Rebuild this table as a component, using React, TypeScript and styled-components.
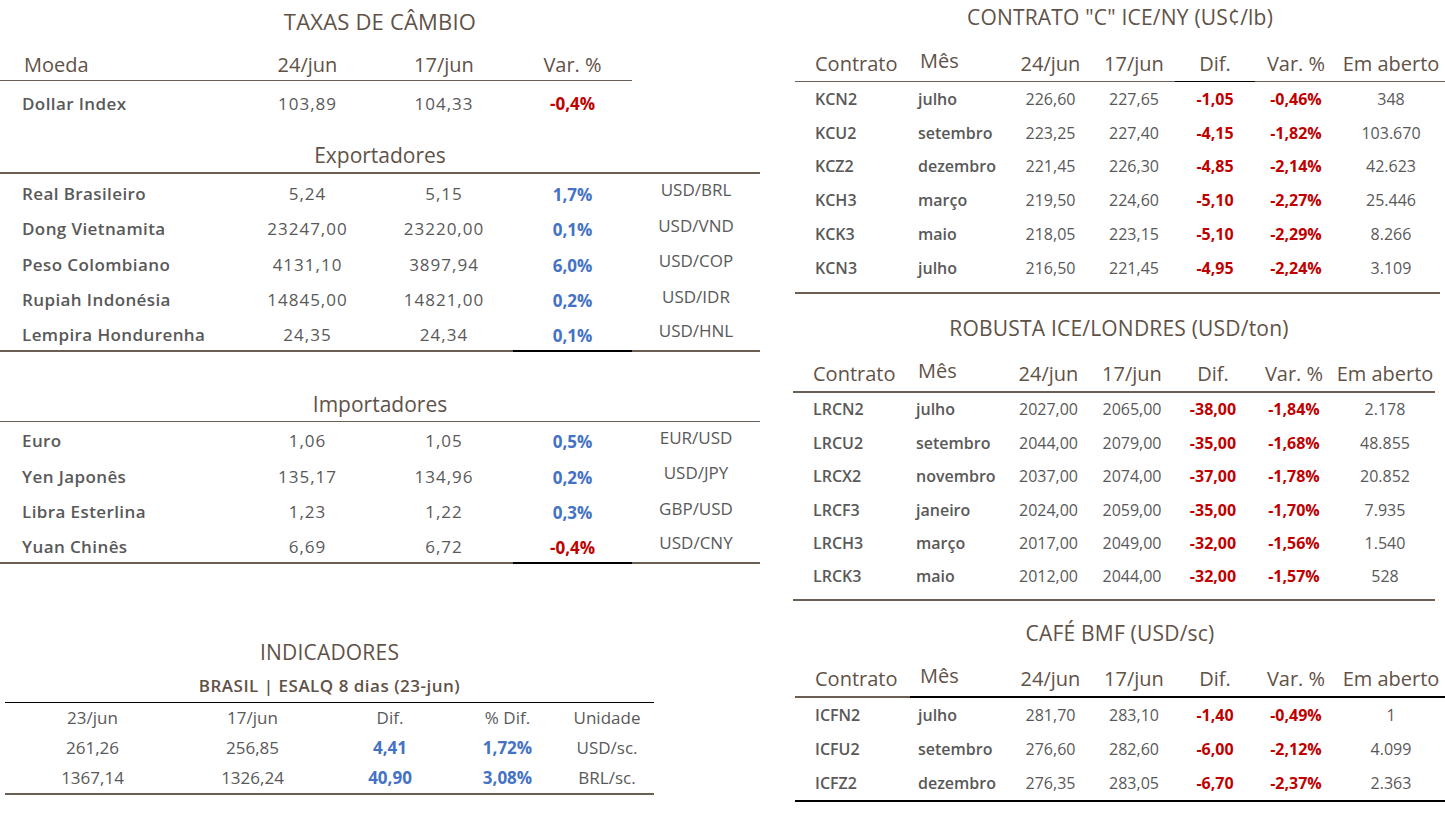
import styled, { createGlobalStyle } from 'styled-components';

const BROWN = '#5f5247';
const LINE = '#6b5e53';
const TEXT = '#595959';
const RED = '#c00000';
const BLUE = '#4472c4';

const GlobalStyle = createGlobalStyle`
  body {
    margin: 0;
    background: #ffffff;
    font-family: 'Open Sans', 'Liberation Sans', sans-serif;
  }
`;

type Tone = 'head' | 'label' | 'value' | 'red' | 'blue' | 'unit';
type Align = 'left' | 'center';

const tones: Record<Tone, string> = {
  head: `color: ${BROWN}; font-size: 20px; font-weight: 500;`,
  label: `color: ${TEXT}; font-weight: 600;`,
  value: `color: ${TEXT}; font-weight: 400;`,
  red: `color: ${RED}; font-weight: 700;`,
  blue: `color: ${BLUE}; font-weight: 700;`,
  unit: `color: ${TEXT}; font-weight: 400;`,
};

const Page = styled.div`
  display: flex;
  width: 1445px;
  height: 827px;
  overflow: hidden;
`;

const LeftCol = styled.div`
  display: flex;
  flex-direction: column;
  width: 760px;
`;

const RightCol = styled.div`
  display: flex;
  flex-direction: column;
  width: 652px;
  margin-left: 33px;
`;

const Title = styled.div<{ $h: number; $size?: number }>`
  height: ${(p) => p.$h}px;
  line-height: ${(p) => p.$h}px;
  text-align: center;
  color: ${BROWN};
  font-size: ${(p) => p.$size ?? 21}px;
  font-weight: 500;
  letter-spacing: 0.2px;
`;

const Row = styled.div<{ $cols: string; $h: number; $size?: number }>`
  display: grid;
  grid-template-columns: ${(p) => p.$cols};
  height: ${(p) => p.$h}px;
  font-size: ${(p) => p.$size ?? 16}px;
`;

const Cell = styled.div<{
  $tone: Tone;
  $align?: Align;
  $pl?: number;
  $line?: string;
  $lw?: number;
  $end?: boolean;
  $pb?: number;
  $pt?: number;
  $ls?: number;
}>`
  box-sizing: border-box;
  display: flex;
  align-items: ${(p) => (p.$end ? 'flex-end' : 'center')};
  justify-content: ${(p) => (p.$align === 'left' ? 'flex-start' : 'center')};
  padding-left: ${(p) => p.$pl ?? 0}px;
  padding-bottom: ${(p) => p.$pb ?? 0}px;
  padding-top: ${(p) => p.$pt ?? 0}px;
  letter-spacing: ${(p) => p.$ls ?? 0}px;
  white-space: nowrap;
  border-bottom: ${(p) => (p.$line ? `${p.$lw ?? 2}px solid ${p.$line}` : 'none')};
  ${(p) => tones[p.$tone]}
`;

const SectionHead = styled.div<{ $h: number; $lw: number }>`
  box-sizing: border-box;
  height: ${(p) => p.$h}px;
  display: flex;
  align-items: flex-end;
  justify-content: center;
  padding-bottom: 3px;
  border-bottom: ${(p) => p.$lw}px solid ${LINE};
  color: ${BROWN};
  font-size: 21px;
  font-weight: 500;
`;

/* ---------- Taxas de câmbio ---------- */

const FX_COLS = '240px 135px 138px 119px 128px';

type FxRow = [string, string, string, string, string];

const exportadores: FxRow[] = [
  ['Real Brasileiro', '5,24', '5,15', '1,7%', 'USD/BRL'],
  ['Dong Vietnamita', '23247,00', '23220,00', '0,1%', 'USD/VND'],
  ['Peso Colombiano', '4131,10', '3897,94', '6,0%', 'USD/COP'],
  ['Rupiah Indonésia', '14845,00', '14821,00', '0,2%', 'USD/IDR'],
  ['Lempira Hondurenha', '24,35', '24,34', '0,1%', 'USD/HNL'],
];

const importadores: FxRow[] = [
  ['Euro', '1,06', '1,05', '0,5%', 'EUR/USD'],
  ['Yen Japonês', '135,17', '134,96', '0,2%', 'USD/JPY'],
  ['Libra Esterlina', '1,23', '1,22', '0,3%', 'GBP/USD'],
  ['Yuan Chinês', '6,69', '6,72', '-0,4%', 'USD/CNY'],
];

const signTone = (v: string): Tone => (v.startsWith('-') ? 'red' : 'blue');

const FxLines = ({ rows }: { rows: FxRow[] }) => (
  <>
    {rows.map((r, i) => {
      const last = i === rows.length - 1;
      const line = last ? LINE : undefined;
      return (
        <Row key={r[0]} $cols={FX_COLS} $h={35.5} $size={17}>
          <Cell $tone="label" $align="left" $pl={22} $pt={3} $ls={0.4} $line={line}>
            {r[0]}
          </Cell>
          <Cell $tone="value" $pt={3} $ls={1} $line={line}>
            {r[1]}
          </Cell>
          <Cell $tone="value" $pt={3} $ls={1} $line={line}>
            {r[2]}
          </Cell>
          <Cell $tone={signTone(r[3])} $pt={5} $line={last ? '#000000' : undefined}>
            {r[3]}
          </Cell>
          <Cell $tone="unit" $pb={4} $line={line}>
            {r[4]}
          </Cell>
        </Row>
      );
    })}
  </>
);

const TaxasDeCambio = () => (
  <div>
    <Title $h={42} $size={22}>TAXAS DE CÂMBIO</Title>
    <Row $cols={FX_COLS} $h={39}>
      <Cell $tone="head" $align="left" $pl={24} $end $pb={2} $line={LINE} $lw={1.5}>Moeda</Cell>
      <Cell $tone="head" $end $pb={2} $line={LINE} $lw={1.5}>24/jun</Cell>
      <Cell $tone="head" $end $pb={2} $line={LINE} $lw={1.5}>17/jun</Cell>
      <Cell $tone="head" $end $pb={2} $line={LINE} $lw={1.5}>Var. %</Cell>
      <Cell $tone="unit" />
    </Row>
    <Row $cols={FX_COLS} $h={44} $size={17}>
      <Cell $tone="label" $align="left" $pl={22} $ls={0.4}>Dollar Index</Cell>
      <Cell $tone="value" $ls={1}>103,89</Cell>
      <Cell $tone="value" $ls={1}>104,33</Cell>
      <Cell $tone="red">-0,4%</Cell>
      <Cell $tone="unit" />
    </Row>
    <SectionHead $h={49} $lw={2}>Exportadores</SectionHead>
    <FxLines rows={exportadores} />
    <SectionHead $h={70} $lw={1}>Importadores</SectionHead>
    <FxLines rows={importadores} />
  </div>
);

/* ---------- Indicadores ---------- */

const IND_COLS = '175px 145px 130px 105px 94px';

const IndBlock = styled.div`
  width: 649px;
  margin: 71px 0 0 5px;
`;

const SubTitle = styled.div`
  box-sizing: border-box;
  height: 34px;
  display: flex;
  align-items: center;
  justify-content: center;
  border-bottom: 1px solid #000000;
  color: ${BROWN};
  font-size: 17px;
  font-weight: 600;
  letter-spacing: 0.5px;
`;

const indRows: [string, string, string, string, string][] = [
  ['261,26', '256,85', '4,41', '1,72%', 'USD/sc.'],
  ['1367,14', '1326,24', '40,90', '3,08%', 'BRL/sc.'],
];

const Indicadores = () => (
  <IndBlock>
    <Title $h={34}>INDICADORES</Title>
    <SubTitle>BRASIL | ESALQ 8 dias (23-jun)</SubTitle>
    <Row $cols={IND_COLS} $h={30} $size={17}>
      {['23/jun', '17/jun', 'Dif.', '% Dif.', 'Unidade'].map((h) => (
        <Cell key={h} $tone="value">{h}</Cell>
      ))}
    </Row>
    {indRows.map((r, i) => {
      const line = i === indRows.length - 1 ? LINE : undefined;
      return (
        <Row key={r[0]} $cols={IND_COLS} $h={i === 0 ? 30 : 32} $size={17}>
          <Cell $tone="value" $line={line}>{r[0]}</Cell>
          <Cell $tone="value" $line={line}>{r[1]}</Cell>
          <Cell $tone="blue" $line={line}>{r[2]}</Cell>
          <Cell $tone="blue" $line={line}>{r[3]}</Cell>
          <Cell $tone="value" $line={line}>{r[4]}</Cell>
        </Row>
      );
    })}
  </IndBlock>
);

/* ---------- Contratos (direita) ---------- */

type Contract = [string, string, string, string, string, string, string];

const kcRows: Contract[] = [
  ['KCN2', 'julho', '226,60', '227,65', '-1,05', '-0,46%', '348'],
  ['KCU2', 'setembro', '223,25', '227,40', '-4,15', '-1,82%', '103.670'],
  ['KCZ2', 'dezembro', '221,45', '226,30', '-4,85', '-2,14%', '42.623'],
  ['KCH3', 'março', '219,50', '224,60', '-5,10', '-2,27%', '25.446'],
  ['KCK3', 'maio', '218,05', '223,15', '-5,10', '-2,29%', '8.266'],
  ['KCN3', 'julho', '216,50', '221,45', '-4,95', '-2,24%', '3.109'],
];

const lrcRows: Contract[] = [
  ['LRCN2', 'julho', '2027,00', '2065,00', '-38,00', '-1,84%', '2.178'],
  ['LRCU2', 'setembro', '2044,00', '2079,00', '-35,00', '-1,68%', '48.855'],
  ['LRCX2', 'novembro', '2037,00', '2074,00', '-37,00', '-1,78%', '20.852'],
  ['LRCF3', 'janeiro', '2024,00', '2059,00', '-35,00', '-1,70%', '7.935'],
  ['LRCH3', 'março', '2017,00', '2049,00', '-32,00', '-1,56%', '1.540'],
  ['LRCK3', 'maio', '2012,00', '2044,00', '-32,00', '-1,57%', '528'],
];

const icfRows: Contract[] = [
  ['ICFN2', 'julho', '281,70', '283,10', '-1,40', '-0,49%', '1'],
  ['ICFU2', 'setembro', '276,60', '282,60', '-6,00', '-2,12%', '4.099'],
  ['ICFZ2', 'dezembro', '276,35', '283,05', '-6,70', '-2,37%', '2.363'],
];

const ContractBlock = styled.div<{ $ml: number; $mt: number }>`
  margin-left: ${(p) => p.$ml}px;
  margin-top: ${(p) => p.$mt}px;
`;

const Body = styled.div<{ $pb: number; $line: string; $w: number }>`
  width: ${(p) => p.$w}px;
  padding-bottom: ${(p) => p.$pb}px;
  border-bottom: 2px solid ${(p) => p.$line};
`;

const HEADS = ['Contrato', 'Mês', '24/jun', '17/jun', 'Dif.', 'Var. %', 'Em aberto'];

type ContractTableProps = {
  title: string;
  rows: Contract[];
  cols: string;
  ml: number;
  mt: number;
  rowH: number;
  headLines: string[];
  headW: number;
  bottomLine: string;
  bottomW: number;
  pb: number;
};

const ContractTable = ({
  title,
  rows,
  cols,
  ml,
  mt,
  rowH,
  headLines,
  headW,
  bottomLine,
  bottomW,
  pb,
}: ContractTableProps) => (
  <ContractBlock $ml={ml} $mt={mt}>
    <Title $h={34}>{title}</Title>
    <Row $cols={cols} $h={48}>
      {HEADS.map((h, i) => (
        <Cell
          key={h}
          $tone="head"
          $align={i < 2 ? 'left' : 'center'}
          $pl={i === 0 ? 20 : i === 1 ? 10 : 0}
          $end
          $pb={i === 1 ? 7 : 4}
          $line={headLines[i]}
          $lw={headW}
        >
          {h}
        </Cell>
      ))}
    </Row>
    <Body $pb={pb} $line={bottomLine} $w={bottomW}>
      {rows.map((r) => (
        <Row key={r[0]} $cols={cols} $h={rowH}>
          <Cell $tone="label" $align="left" $pl={20}>{r[0]}</Cell>
          <Cell $tone="label" $align="left" $pl={8}>{r[1]}</Cell>
          <Cell $tone="value">{r[2]}</Cell>
          <Cell $tone="value">{r[3]}</Cell>
          <Cell $tone="red">{r[4]}</Cell>
          <Cell $tone="red">{r[5]}</Cell>
          <Cell $tone="value">{r[6]}</Cell>
        </Row>
      ))}
    </Body>
  </ContractBlock>
);

const KC_COLS = '115px 98px 85px 82px 80px 82px 108px';
const LRC_COLS = '115px 98px 85px 82px 80px 82px 100px';

const all = (c: string) => [c, c, c, c, c, c, c];

export default function App() {
  return (
    <Page>
      <GlobalStyle />
      <LeftCol>
        <TaxasDeCambio />
        <Indicadores />
      </LeftCol>
      <RightCol>
        <ContractTable
          title={'CONTRATO "C" ICE/NY (US¢/lb)'}
          rows={kcRows}
          cols={KC_COLS}
          ml={2}
          mt={0}
          rowH={33.8}
          headLines={[LINE, LINE, LINE, LINE, '#000000', LINE, LINE]}
          headW={1.5}
          bottomLine={LINE}
          bottomW={645}
          pb={7}
        />
        <ContractTable
          title="ROBUSTA ICE/LONDRES (USD/ton)"
          rows={lrcRows}
          cols={LRC_COLS}
          ml={0}
          mt={17}
          rowH={33.4}
          headLines={all(LINE)}
          headW={2}
          bottomLine={LINE}
          bottomW={642}
          pb={6}
        />
        <ContractTable
          title="CAFÉ BMF (USD/sc)"
          rows={icfRows}
          cols={KC_COLS}
          ml={2}
          mt={15}
          rowH={34}
          headLines={[LINE, '#000000', '#000000', '#000000', '#000000', '#000000', '#000000']}
          headW={2}
          bottomLine="#000000"
          bottomW={650}
          pb={0}
        />
      </RightCol>
    </Page>
  );
}
